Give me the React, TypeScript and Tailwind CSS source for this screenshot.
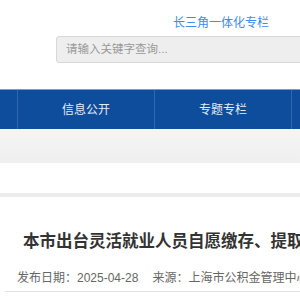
const navItems = [
  { name: '', width: 'w-[137px]' },
  { name: '信息公开', width: 'w-[137px]' },
  { name: '专题专栏', width: 'w-[137px]' },
  { name: '', width: 'w-[137px]' },
];

export default function App() {
  return (
    <div className="w-[300px] h-[300px] overflow-hidden bg-white font-['Liberation_Sans','Noto_Sans_CJK_SC',sans-serif]">
      {/* header */}
      <div className="h-[89px] pt-[15px]">
        <a className="block pl-[173px] text-[12px] leading-[16px] text-[#3b8cf5]">
          长三角一体化专栏
        </a>
        <div className="mt-[5px] ml-[56px] w-[270px] h-[27px] flex items-center pl-[9px] bg-[#eeeeee] border border-[#d8d8d8] rounded-[3px] text-[11.5px] text-[#999999]">
          请输入关键字查询...
        </div>
      </div>

      {/* nav */}
      <nav className="h-[40px] bg-[#0e4c9c] border-t border-[#7d9cc9] overflow-hidden">
        <ul className="flex h-full ml-[-119px]">
          {navItems.map((item, i) => (
            <li
              key={i}
              className={`${item.width} shrink-0 h-full flex items-center justify-center border-r border-[#3166b0] text-[12px] text-[#e4ecf7]`}
            >
              {item.name}
            </li>
          ))}
        </ul>
      </nav>

      <div className="h-[34px] bg-gradient-to-b from-[#f5f5f5] to-[#efefef]"></div>
      <div className="h-[30px] bg-white"></div>
      <div className="h-[4px] bg-[#ececec]"></div>

      {/* article */}
      <div className="pt-[32px] overflow-hidden">
        <h1 className="pl-[23px] text-[16.5px] leading-[24px] font-bold text-[#333333] whitespace-nowrap">
          本市出台灵活就业人员自愿缴存、提取住房公积金政策
        </h1>
        <div className="mt-[16px] pl-[17px] text-[12px] leading-[18px] text-[#666666] whitespace-nowrap">
          <span>发布日期：2025-04-28</span>
          <span className="ml-[14px]">来源：上海市公积金管理中心</span>
        </div>
        <div className="mt-[4px] ml-[5px] border-t border-[#e2e2e2]"></div>
      </div>
    </div>
  );
}
